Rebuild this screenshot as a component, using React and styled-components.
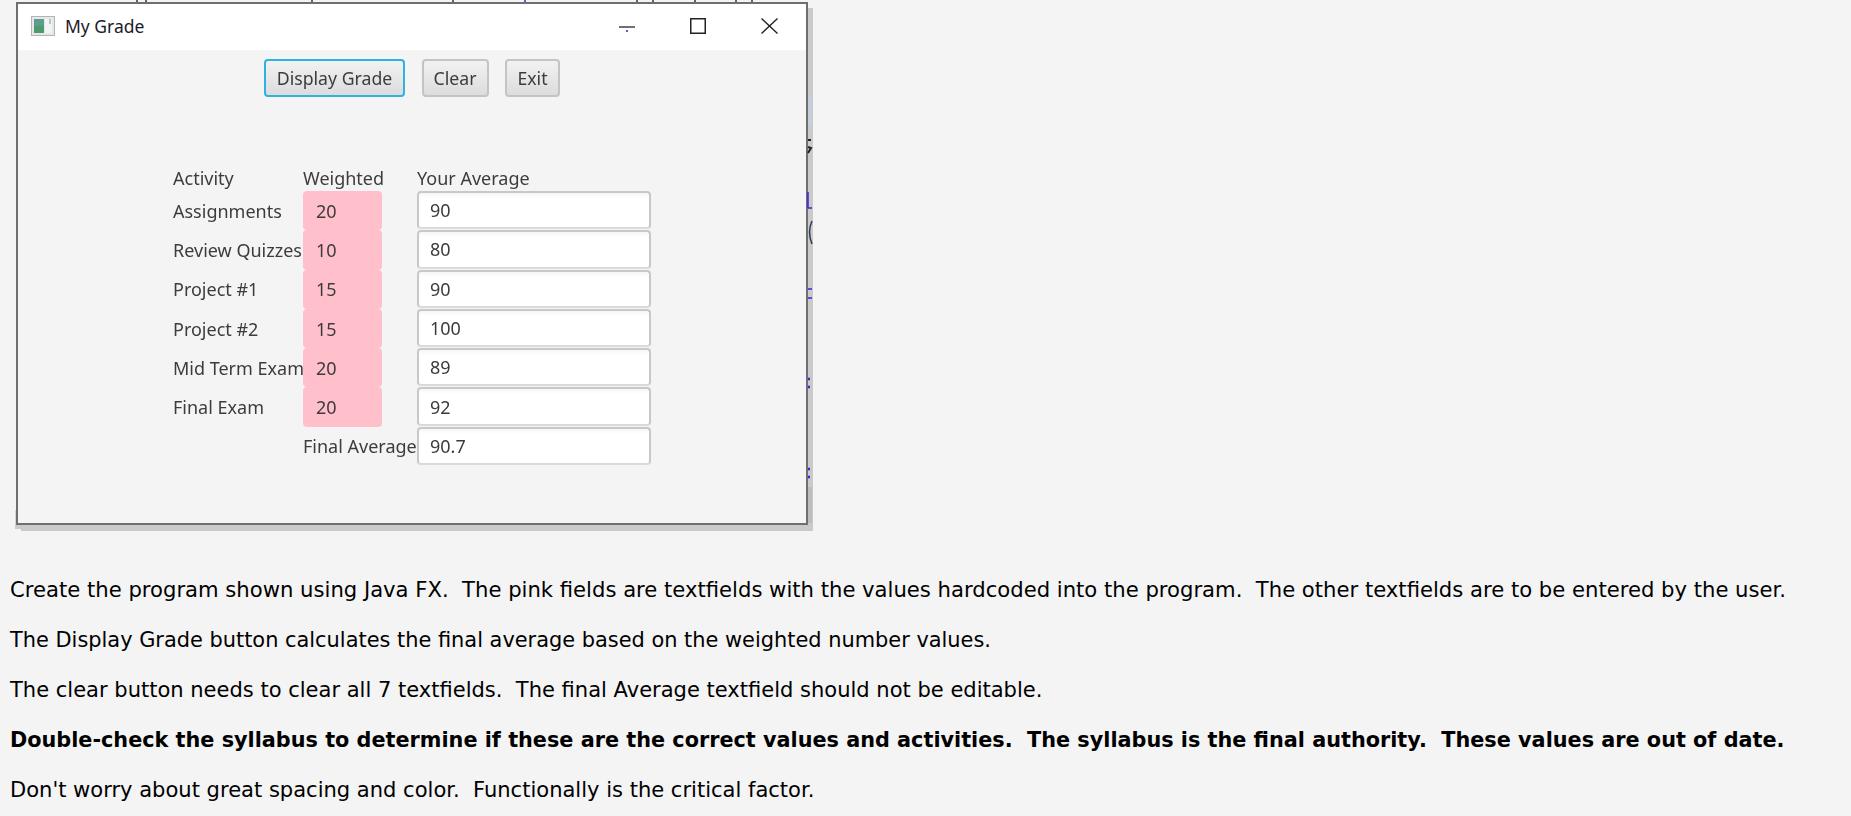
import React from 'react';
import styled, { createGlobalStyle } from 'styled-components';

const GlobalStyle = createGlobalStyle`
  html, body {
    margin: 0;
    padding: 0;
    background: #f4f4f4;
    overflow: hidden;
  }
`;

const Page = styled.div`
  position: relative;
  width: 1851px;
  height: 816px;
  padding-top: 2px;
  box-sizing: border-box;
`;

const Scraps = styled.svg`
  position: absolute;
  left: 0;
  top: 0;
  z-index: 2;
  pointer-events: none;
`;

const Window = styled.div`
  position: relative;
  margin-left: 16px;
  width: 792px;
  height: 523px;
  box-sizing: border-box;
  border: 2px solid #6f6f6f;
  background: #f4f4f4;
  box-shadow: 5px 6px 0 #cacaca;
  font-family: "Noto Sans", "Open Sans", sans-serif;
  color: #3c3c3c;
  filter: blur(0.35px);
`;

const TitleBar = styled.div`
  display: flex;
  align-items: center;
  height: 46px;
  padding: 0 0 2px 13px;
  box-sizing: border-box;
  background: #fff;
`;

const AppTitle = styled.span`
  margin-left: 10px;
  font-size: 17.5px;
  color: #1a1a2a;
`;

const Controls = styled.div`
  display: flex;
  align-items: center;
  margin-left: auto;
  padding-right: 28px;
  gap: 55px;
`;

const Toolbar = styled.div`
  display: flex;
  justify-content: center;
  gap: 16.5px;
  margin-top: 9px;
`;

const Button = styled.div`
  display: flex;
  align-items: center;
  justify-content: center;
  height: 38px;
  width: ${p => p.$w}px;
  box-sizing: border-box;
  border-radius: 4px;
  border: 2px solid ${p => (p.$focused ? '#2fb2e0' : '#c4c4c4')};
  background: linear-gradient(#f2f2f2, #dcdcdc);
  font-size: 17.7px;
`;

const Table = styled.div`
  display: grid;
  grid-template-columns: 130px 114px 234px;
  grid-template-rows: 23px repeat(7, 39.3px);
  margin: 71px 0 0 155px;
  font-size: 18px;
`;

const Label = styled.div`
  display: flex;
  align-items: center;
  white-space: nowrap;
  grid-column: ${p => p.$col || 'auto'};
`;

const Heading = styled(Label)`
  padding-bottom: 4px;
`;

const Weight = styled.div`
  display: flex;
  align-items: center;
  width: 79px;
  padding-left: 13px;
  box-sizing: border-box;
  background: #ffc0cb;
  border-radius: 4px;
`;

const Field = styled.div`
  display: flex;
  align-items: center;
  margin-bottom: 1px;
  padding-left: 11px;
  box-sizing: border-box;
  background: linear-gradient(#f6f6f6, #fff 5px);
  border: 2px solid #c8c8c8;
  border-bottom-color: #dadada;
  border-radius: 4px;
`;

const Instructions = styled.div`
  padding: 55px 0 0 10px;
  font-family: "DejaVu Sans", Verdana, sans-serif;
  line-height: 20px;
  color: #000;
`;

const Para = styled.p`
  margin: 0 0 30px;
  white-space: pre;
  font-size: ${p => p.$size}px;
  font-weight: ${p => (p.$bold ? 700 : 400)};
`;

const rows = [
  ['Assignments', 20, 90],
  ['Review Quizzes', 10, 80],
  ['Project #1', 15, 90],
  ['Project #2', 15, 100],
  ['Mid Term Exam', 20, 89],
  ['Final Exam', 20, 92],
];

const AppIcon = () => (
  <svg width="24" height="20" viewBox="0 0 24 20">
    <rect x="0.5" y="0.5" width="23" height="19" fill="#e6e8e8" stroke="#b4b4b4" />
    <rect x="3" y="3" width="10" height="14" fill="#5f9c90" />
    <rect x="3" y="10" width="10" height="7" fill="#4f9a6a" />
    <rect x="14" y="3" width="7" height="14" fill="#f2f4f4" />
    <rect x="18" y="3" width="2" height="5" fill="#b8c6c4" />
  </svg>
);

const MinimizeIcon = () => (
  <svg width="16" height="16" viewBox="0 0 16 16">
    <path d="M0 9h16" stroke="#333" strokeWidth="1.4" />
    <circle cx="8" cy="13" r="1.1" fill="#3232dc" />
  </svg>
);

const MaximizeIcon = () => (
  <svg width="16" height="16" viewBox="0 0 16 16">
    <rect x="0.75" y="0.75" width="14.5" height="14.5" fill="none" stroke="#222" strokeWidth="1.5" />
  </svg>
);

const CloseIcon = () => (
  <svg width="17" height="16" viewBox="0 0 17 16">
    <path d="M0.5 0.5L16.5 15.5M16.5 0.5L0.5 15.5" stroke="#222" strokeWidth="1.4" />
  </svg>
);

const App = () => {
  return (
    <Page>
      <GlobalStyle />
      <Window>
        <TitleBar>
          <AppIcon />
          <AppTitle>My Grade</AppTitle>
          <Controls>
            <MinimizeIcon />
            <MaximizeIcon />
            <CloseIcon />
          </Controls>
        </TitleBar>
        <Toolbar>
          <Button $w={141} $focused>Display Grade</Button>
          <Button $w={67}>Clear</Button>
          <Button $w={55}>Exit</Button>
        </Toolbar>
        <Table>
          <Heading>Activity</Heading>
          <Heading>Weighted</Heading>
          <Heading>Your Average</Heading>
          {rows.map(r => (
            <React.Fragment key={r[0]}>
              <Label>{r[0]}</Label>
              <Weight>{r[1]}</Weight>
              <Field>{r[2]}</Field>
            </React.Fragment>
          ))}
          <Label $col="2">Final Average</Label>
          <Field>90.7</Field>
        </Table>
      </Window>
      <Instructions>
        <Para $size={21.15}>Create the program shown using Java FX.  The pink fields are textfields with the values hardcoded into the program.  The other textfields are to be entered by the user.</Para>
        <Para $size={20.9}>The Display Grade button calculates the final average based on the weighted number values.</Para>
        <Para $size={21.03}>The clear button needs to clear all 7 textfields.  The final Average textfield should not be editable.</Para>
        <Para $size={20.79} $bold>Double-check the syllabus to determine if these are the correct values and activities.  The syllabus is the final authority.  These values are out of date.</Para>
        <Para $size={21.04}>Don't worry about great spacing and color.  Functionally is the critical factor.</Para>
      </Instructions>
      <Scraps width="820" height="540" viewBox="0 0 820 540">
        <rect x="15" y="510" width="1" height="19" fill="#d4d4d4" />
        <rect x="15" y="525" width="6" height="4" fill="#cacaca" />
        <rect x="808" y="96" width="4" height="30" fill="#c6ced9" />
        <rect x="808" y="487" width="4" height="36" fill="#bdbdbd" />
        <path d="M808 140h3M808 147l3 1-3 5" stroke="#222" strokeWidth="2" fill="none" />
        <path d="M808 192v16M808 208h4" stroke="#3a22e0" strokeWidth="1.5" fill="none" />
        <path d="M812 221q-5 11 0 23" stroke="#2b3a55" strokeWidth="1.5" fill="none" />
        <path d="M808 289h4M808 298h4" stroke="#3a22e0" strokeWidth="1.5" fill="none" />
        <path d="M808 379h2M808 387h2M808 469h2M808 477h2" stroke="#3a22e0" strokeWidth="2.5" fill="none" />
        <path d="M137 0v2M146 0v2M312 0v2M453 0v2M637 0v2M653 0v2M695 0v2M736 0v2M752 0v2" stroke="#333" strokeWidth="1.5" />
        <path d="M525 0v2" stroke="#3a22e0" strokeWidth="1.5" />
      </Scraps>
    </Page>
  );
};

export default App;
